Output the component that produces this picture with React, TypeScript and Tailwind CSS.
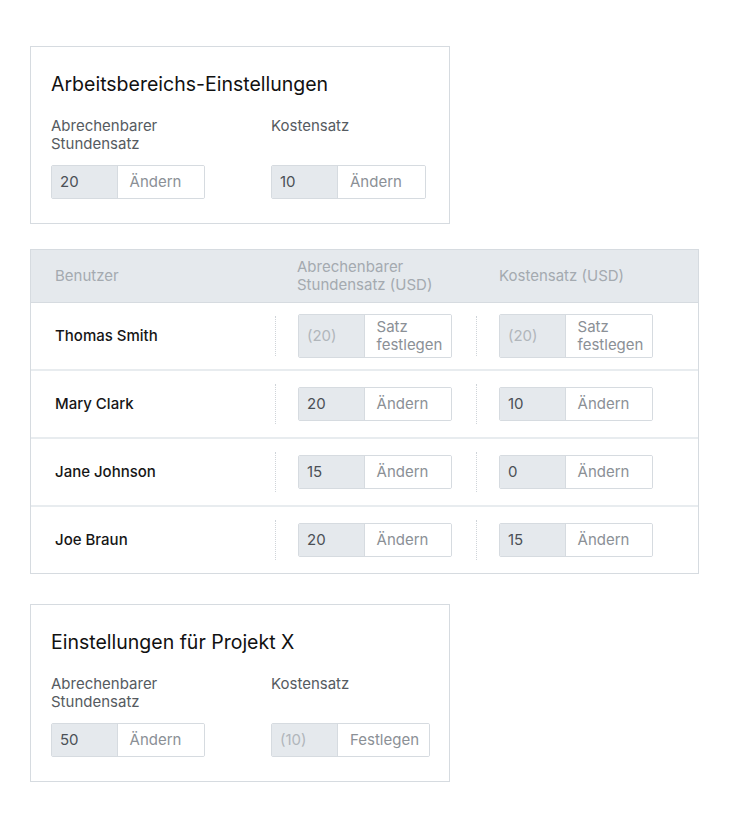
import React from 'react';

type Rate = { value: string; placeholder?: boolean; action: string };

// Grey value box + white action button, glued together
function RateInput({ rate, actionWidth = 'w-[87px]' }: { rate: Rate; actionWidth?: string }) {
    return (
        <div className="flex min-h-[34px] border border-[#d6dbe0] rounded-[2px] overflow-hidden text-[15px] leading-[18px]">
            <div
                className={`w-[66px] bg-[#e5e9ed] flex items-center pl-[8px] border-r border-[#d6dbe0] ${
                    rate.placeholder ? 'text-[#b1b6bb]' : 'text-[#4b5056]'
                }`}
            >
                {rate.value}
            </div>
            <div className={`${actionWidth} bg-white text-[#8b9096] flex items-center pl-[12px] py-[3px]`}>
                {rate.action}
            </div>
        </div>
    );
}

function SettingsCard({ title, billable, cost, costWidth }: { title: string; billable: Rate; cost: Rate; costWidth?: string }) {
    return (
        <div className="w-[420px] border border-[#d6dbe0] bg-white pl-[20px] pt-[25px] pb-[24px]">
            <h2 className="text-[19.5px] leading-[24px] text-[#111] font-normal">{title}</h2>
            <div className="flex mt-[21px]">
                <div className="w-[220px]">
                    <div className="text-[15px] leading-[18px] text-[#565b61] w-[150px] h-[36px]">Abrechenbarer Stundensatz</div>
                    <div className="mt-[12px] w-[154px]">
                        <RateInput rate={billable} />
                    </div>
                </div>
                <div>
                    <div className="text-[15px] leading-[18px] text-[#565b61] h-[36px]">Kostensatz</div>
                    <div className="mt-[12px]">
                        <RateInput rate={cost} actionWidth={costWidth} />
                    </div>
                </div>
            </div>
        </div>
    );
}

const users: { name: string; billable: Rate; cost: Rate }[] = [
    { name: 'Thomas Smith', billable: { value: '(20)', placeholder: true, action: 'Satz festlegen' }, cost: { value: '(20)', placeholder: true, action: 'Satz festlegen' } },
    { name: 'Mary Clark', billable: { value: '20', action: 'Ändern' }, cost: { value: '10', action: 'Ändern' } },
    { name: 'Jane Johnson', billable: { value: '15', action: 'Ändern' }, cost: { value: '0', action: 'Ändern' } },
    { name: 'Joe Braun', billable: { value: '20', action: 'Ändern' }, cost: { value: '15', action: 'Ändern' } },
];

function UserTable() {
    return (
        <div className="w-[669px] border border-[#d6dbe0] bg-white">
            {/* Header */}
            <div className="flex items-center h-[53px] bg-[#e5e9ed] border-b border-[#d6dbe0] text-[15px] leading-[18px] text-[#a4aab0]">
                <div className="w-[244px] pl-[24px]">Benutzer</div>
                <div className="w-[201px] pl-[22px] pr-[30px]">Abrechenbarer Stundensatz (USD)</div>
                <div className="pl-[23px]">Kostensatz (USD)</div>
            </div>
            {/* Rows */}
            {users.map((u, i) => (
                <div
                    key={u.name}
                    className={`flex items-center ${i < users.length - 1 ? 'h-[68px] border-b-2 border-[#e8ecef]' : 'h-[66px]'}`}
                >
                    <div className="w-[244px] pl-[24px] text-[15px] font-medium text-[#161616]">{u.name}</div>
                    <div className="w-[201px] flex items-center">
                        <div className="h-[40px] border-l border-dotted border-[#cfd4d9]" />
                        <div className="ml-[22px] w-[154px]">
                            <RateInput rate={u.billable} />
                        </div>
                    </div>
                    <div className="flex items-center">
                        <div className="h-[40px] border-l border-dotted border-[#cfd4d9]" />
                        <div className="ml-[22px] w-[154px]">
                            <RateInput rate={u.cost} />
                        </div>
                    </div>
                </div>
            ))}
        </div>
    );
}

export default function App() {
    return (
        <div className="min-h-screen bg-white pl-[30px] pt-[46px] pb-[40px]" style={{ fontFamily: 'Inter, "Noto Sans", sans-serif' }}>
            <SettingsCard
                title="Arbeitsbereichs-Einstellungen"
                billable={{ value: '20', action: 'Ändern' }}
                cost={{ value: '10', action: 'Ändern' }}
            />
            <div className="mt-[25px]">
                <UserTable />
            </div>
            <div className="mt-[30px]">
                <SettingsCard
                    title="Einstellungen für Projekt X"
                    billable={{ value: '50', action: 'Ändern' }}
                    cost={{ value: '(10)', placeholder: true, action: 'Festlegen' }}
                    costWidth="w-[91px]"
                />
            </div>
        </div>
    );
}
